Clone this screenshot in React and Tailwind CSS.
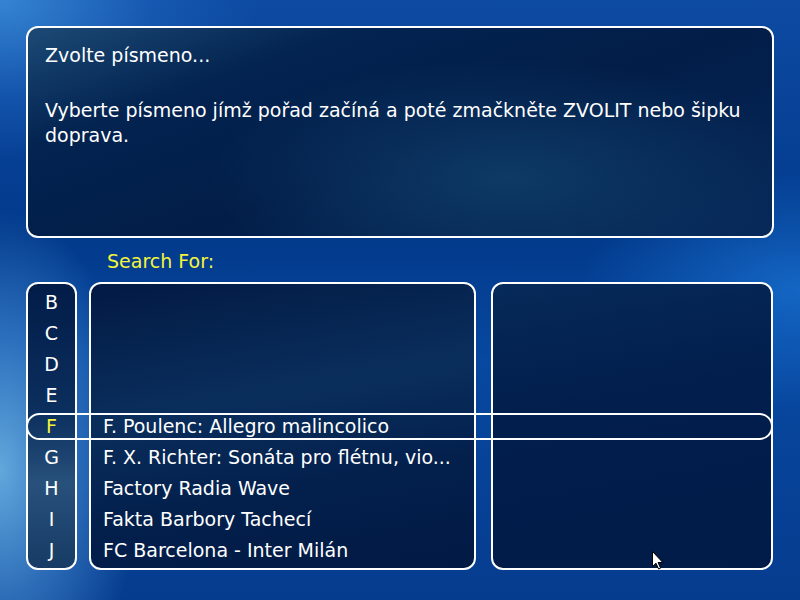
import React from "react";

const letters = ["B", "C", "D", "E", "F", "G", "H", "I", "J"];
const items = [
  "",
  "",
  "",
  "",
  "F. Poulenc: Allegro malincolico",
  "F. X. Richter: Sonáta pro flétnu, vio...",
  "Factory Radia Wave",
  "Fakta Barbory Tachecí",
  "FC Barcelona - Inter Milán",
];

function Cursor() {
  return (
    <svg
      className="absolute left-[652px] top-[551px]"
      width="12"
      height="19"
      viewBox="0 0 12 19"
    >
      <path
        d="M0.5 0.5 L0.5 15.5 L4 12.2 L6.6 18 L8.6 17.1 L6.1 11.5 L10.8 11.5 Z"
        fill="#ffffff"
        stroke="#000000"
        strokeWidth="1"
      />
    </svg>
  );
}

export default function App() {
  return (
    <div
      className="relative w-[800px] h-[600px] overflow-hidden text-white bg-[#0a3f92] bg-[radial-gradient(ellipse_140px_260px_at_0px_470px,#62a8dc_0%,rgba(70,140,210,0.6)_50%,rgba(10,63,146,0)_100%),radial-gradient(ellipse_260px_160px_at_0px_0px,#3584d2_0%,rgba(30,100,190,0.5)_60%,rgba(10,63,146,0)_100%),radial-gradient(ellipse_220px_120px_at_800px_290px,#1466c4_0%,rgba(20,100,196,0)_100%),linear-gradient(180deg,#0d4aa2_0%,#023a8c_40%,#0748a0_60%,#063c8e_100%)]"
      style={{ fontFamily: '"DejaVu Sans", Verdana, sans-serif' }}
    >
      <div className="flex flex-col pt-[26px] px-[26px]">
        {/* info box */}
        <div className="h-[212px] rounded-[12px] border-2 border-white px-[17px] pt-[15px] text-[19px] leading-[25px] bg-[#021d48] bg-[radial-gradient(ellipse_300px_120px_at_480px_150px,#0e3a66_0%,rgba(14,58,102,0)_100%),linear-gradient(160deg,#1c4a76_0%,#032350_25%,#021d48_55%,#06285a_100%)]">
          <p>Zvolte písmeno...</p>
          <p className="mt-[30px]">
            Vyberte písmeno jímž pořad začíná a poté zmačkněte ZVOLIT nebo šipku
            doprava.
          </p>
        </div>

        <div className="ml-[81px] mt-[11px] h-[33px] text-[19px] leading-[25px] text-[#f4f43a]">
          Search For:
        </div>

        {/* selector row */}
        <div className="relative flex h-[288px] text-[19px]">
          <div className="w-[51px] rounded-[12px] border-2 border-white pt-[3px] bg-[linear-gradient(180deg,#021c48_0%,#0b2f5e_45%,#27507a_70%,#173c66_100%)]">
            {letters.map((l) => (
              <div
                key={l}
                className={
                  "h-[31px] flex items-center justify-center " +
                  (l === "F" ? "text-[#f4f43a]" : "text-white")
                }
              >
                {l}
              </div>
            ))}
          </div>

          <div className="ml-[12px] w-[387px] rounded-[12px] border-2 border-white pt-[3px] pl-[12px] bg-[#021c48] bg-[linear-gradient(170deg,#021a44_0%,#0a2e5c_40%,#031f4c_70%,#011a44_100%)]">
            {items.map((t, i) => (
              <div key={i} className="h-[31px] flex items-center whitespace-nowrap">
                {t}
              </div>
            ))}
          </div>

          <div className="ml-[15px] w-[282px] rounded-[12px] border-2 border-white bg-[#011c4a] bg-[linear-gradient(170deg,#062a5a_0%,#021e4c_40%,#011b48_100%)]" />

          {/* highlight bar */}
          <div className="absolute left-0 top-[131px] w-[747px] h-[27px] rounded-full border-2 border-white" />
        </div>
      </div>
      <Cursor />
    </div>
  );
}
